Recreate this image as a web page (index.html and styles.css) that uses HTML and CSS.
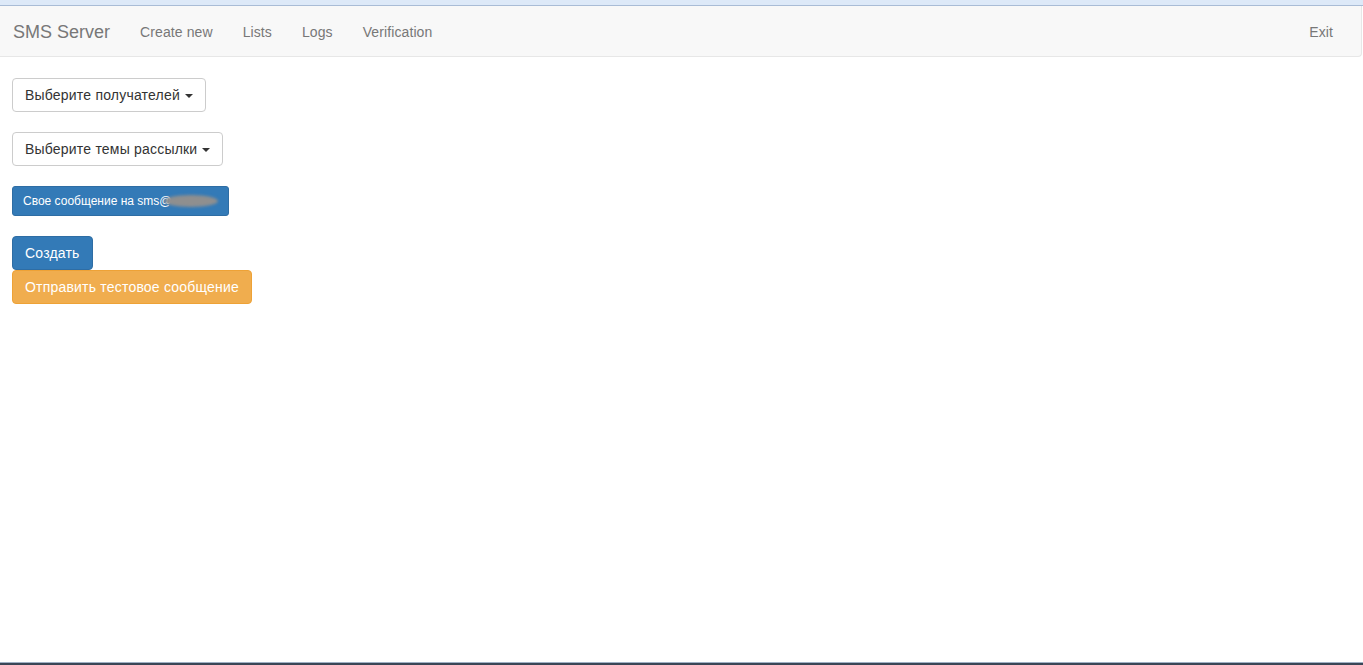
FILE: index.html
```html
<!DOCTYPE html>
<html lang="ru">
<head>
    <meta charset="UTF-8">
    <meta name="viewport" content="width=device-width, initial-scale=1.0">
    <title>SMS Server</title>
    <link rel="stylesheet" href="styles.css">
</head>
<body>
    <div class="topstrip"></div>

    <nav class="navbar">
        <a class="brand" href="#">SMS Server</a>
        <ul class="nav">
            <li><a href="#">Create new</a></li>
            <li><a href="#">Lists</a></li>
            <li><a href="#">Logs</a></li>
            <li><a href="#">Verification</a></li>
        </ul>
        <ul class="nav nav-right">
            <li><a href="#">Exit</a></li>
        </ul>
    </nav>

    <div class="content">
        <button class="btn btn-default">Выберите получателей <span class="caret"></span></button>
        <button class="btn btn-default">Выберите темы рассылки <span class="caret"></span></button>
        <button class="btn btn-primary btn-sm">Свое сообщение на sms@<span class="hidden-mail"></span></button>

        <div class="actions">
            <button class="btn btn-primary">Создать</button>
            <button class="btn btn-warning">Отправить тестовое сообщение</button>
        </div>
    </div>

    <div class="bottomstrip"></div>
</body>
</html>
```

FILE: styles.css
```css
html, body {
    height: 100%;
}

body {
    margin: 0;
    font-family: "Liberation Sans", Arial, sans-serif;
    font-size: 14px;
    color: #333;
    background: #fff;
    display: flex;
    flex-direction: column;
}

.topstrip {
    height: 5px;
    background: #dde9f8;
    border-bottom: 1px solid #a9bcd6;
}

.navbar {
    display: flex;
    align-items: center;
    height: 50px;
    margin-right: 1px;
    background: #f8f8f8;
    border-right: 1px solid #e7e7e7;
    border-bottom: 1px solid #e7e7e7;
    border-radius: 0 0 4px 0;
}

.brand {
    padding: 2px 15px 0 13px;
    font-size: 18px;
    line-height: 50px;
    color: #777;
    text-decoration: none;
}

.nav {
    display: flex;
    list-style: none;
    margin: 0;
    padding: 0;
}

.nav a {
    display: block;
    padding: 2px 15px 0;
    line-height: 50px;
    letter-spacing: 0.1px;
    color: #777;
    text-decoration: none;
}

.nav-right {
    margin-left: auto;
    margin-right: 13px;
}

.content {
    flex: 1;
    display: flex;
    flex-direction: column;
    align-items: flex-start;
    padding: 21px 12px 0;
}

.btn {
    font-family: inherit;
    font-size: 14px;
    line-height: 20px;
    letter-spacing: 0.2px;
    padding: 6px 12px;
    border: 1px solid transparent;
    border-radius: 4px;
    cursor: pointer;
    margin-bottom: 20px;
}

.btn-default {
    color: #333;
    background: #fff;
    border-color: #ccc;
}

.btn-primary {
    color: #fff;
    background: #337ab7;
    border-color: #2e6da4;
}

.btn-warning {
    color: #fff;
    background: #f0ad4e;
    border-color: #eea236;
}

.btn-sm {
    font-size: 12px;
    line-height: 18px;
    letter-spacing: 0;
    padding: 5px 10px;
    border-radius: 3px;
}

.caret {
    display: inline-block;
    width: 0;
    height: 0;
    margin-left: 1px;
    vertical-align: middle;
    border-top: 4px solid #333;
    border-left: 4px solid transparent;
    border-right: 4px solid transparent;
}

/* адрес скрыт */
.hidden-mail {
    display: inline-block;
    width: 54px;
    height: 12px;
    margin-left: -8px;
    vertical-align: -2px;
    background: #8f8f8f;
    border-radius: 50%;
    filter: blur(1.5px);
}

.actions {
    display: flex;
    flex-direction: column;
    align-items: flex-start;
}

.actions .btn {
    margin-bottom: 0;
}

.bottomstrip {
    height: 2px;
    background: #3a4656;
    border-top: 1px solid #9fb0c4;
}
```
